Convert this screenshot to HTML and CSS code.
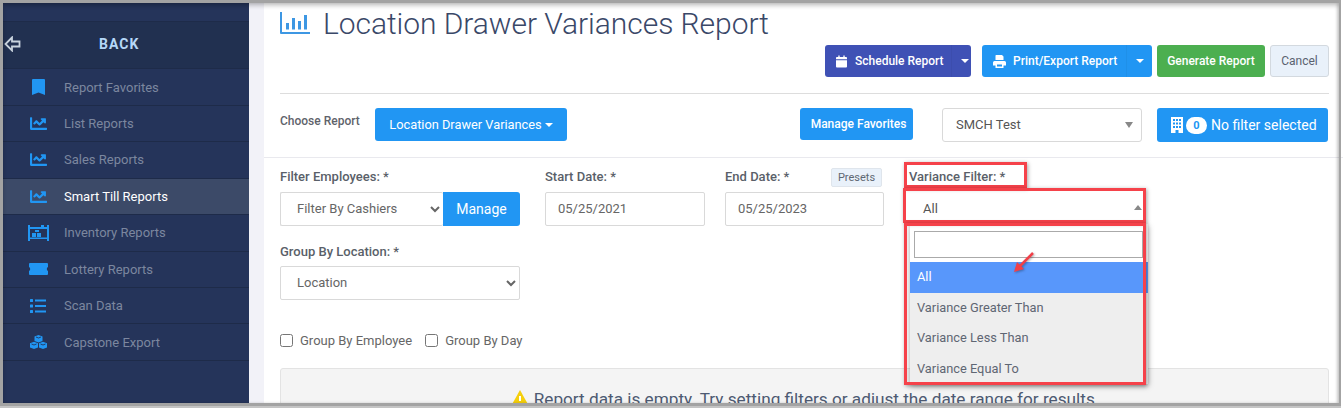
FILE: index.html
```html
<!DOCTYPE html>
<html lang="en">
<head>
    <meta charset="UTF-8">
    <title>Location Drawer Variances Report</title>
    <link rel="stylesheet" href="styles.css">
</head>
<body>
<div class="shot">
    <aside class="sidebar">
        <div class="side-top"></div>
        <div class="side-back">
            <svg class="back-arrow" viewBox="0 0 17 16" width="17" height="16"><path d="M8 1.500 1.500 8 8 14.500V10.500H15.500V5.500H8Z" fill="none" stroke="#c9d3de" stroke-width="1.800"/></svg>
            <span>BACK</span>
        </div>
        <a class="side-item">
            <span class="side-icon"><svg viewBox="0 0 13 16" width="13" height="16"><path d="M0 16V1Q0 0 1 0H12Q13 0 13 1V16L6.500 13.500Z"/></svg></span>Report Favorites
        </a>
        <a class="side-item">
            <span class="side-icon"><svg viewBox="0 0 512 512" width="17" height="17"><path d="M496 384H64V80c0-8.840-7.160-16-16-16H16C7.160 64 0 71.160 0 80v336c0 17.670 14.330 32 32 32h464c8.840 0 16-7.160 16-16v-32c0-8.840-7.160-16-16-16zM464 96H345.940c-21.380 0-32.090 25.850-16.970 40.970l32.400 32.400L288 242.750l-73.370-73.370c-12.500-12.500-32.760-12.500-45.250 0l-68.690 68.690c-6.250 6.250-6.250 16.380 0 22.630l22.620 22.620c6.250 6.250 16.380 6.250 22.630 0L192 237.250l73.370 73.370c12.500 12.500 32.760 12.500 45.250 0l96-96 32.400 32.400c15.120 15.120 40.970 4.410 40.970-16.970V112c0-8.840-7.160-16-16-16z"/></svg></span>List Reports
        </a>
        <a class="side-item">
            <span class="side-icon"><svg viewBox="0 0 512 512" width="17" height="17"><path d="M496 384H64V80c0-8.840-7.160-16-16-16H16C7.160 64 0 71.160 0 80v336c0 17.670 14.330 32 32 32h464c8.840 0 16-7.160 16-16v-32c0-8.840-7.160-16-16-16zM464 96H345.940c-21.380 0-32.090 25.850-16.970 40.970l32.400 32.400L288 242.750l-73.370-73.370c-12.500-12.500-32.760-12.500-45.250 0l-68.690 68.690c-6.250 6.250-6.250 16.380 0 22.630l22.620 22.620c6.250 6.250 16.380 6.250 22.630 0L192 237.250l73.370 73.370c12.500 12.500 32.760 12.500 45.250 0l96-96 32.400 32.400c15.120 15.120 40.970 4.410 40.970-16.970V112c0-8.840-7.160-16-16-16z"/></svg></span>Sales Reports
        </a>
        <a class="side-item active">
            <span class="side-icon"><svg viewBox="0 0 512 512" width="17" height="17"><path d="M496 384H64V80c0-8.840-7.160-16-16-16H16C7.160 64 0 71.160 0 80v336c0 17.670 14.330 32 32 32h464c8.840 0 16-7.160 16-16v-32c0-8.840-7.160-16-16-16zM464 96H345.940c-21.380 0-32.090 25.850-16.970 40.970l32.400 32.400L288 242.750l-73.370-73.370c-12.500-12.500-32.760-12.500-45.250 0l-68.690 68.690c-6.250 6.250-6.250 16.380 0 22.630l22.620 22.620c6.250 6.250 16.380 6.250 22.630 0L192 237.250l73.370 73.370c12.500 12.500 32.760 12.500 45.250 0l96-96 32.400 32.400c15.120 15.120 40.970 4.410 40.970-16.970V112c0-8.840-7.160-16-16-16z"/></svg></span>Smart Till Reports
        </a>
        <a class="side-item">
            <span class="side-icon"><svg viewBox="0 0 21 16" width="21" height="16"><path d="M0 0H2V2H13V0H16V2H19V0H21V16H19V14H2V16H0ZM2 4V12.500H19V4Z" fill-rule="evenodd"/><path d="M4 8H8V12H4ZM9 8H13V12H9ZM7 5H11V7H7Z"/></svg></span>Inventory Reports
        </a>
        <a class="side-item">
            <span class="side-icon"><svg viewBox="0 0 19 12" width="19" height="12"><path d="M1 0H18Q19 0 19 1V4Q17.800 4.500 17.800 6T19 8V11Q19 12 18 12H1Q0 12 0 11V8Q1.200 7.500 1.200 6T0 4V1Q0 0 1 0Z"/></svg></span>Lottery Reports
        </a>
        <a class="side-item">
            <span class="side-icon"><svg viewBox="0 0 16 14" width="16" height="14"><rect width="3" height="3" rx=".5"/><rect y="5.500" width="3" height="3" rx=".5"/><rect y="11" width="3" height="3" rx=".5"/><rect x="5" y=".5" width="11" height="2"/><rect x="5" y="6" width="11" height="2"/><rect x="5" y="11.500" width="11" height="2"/></svg></span>Scan Data
        </a>
        <a class="side-item">
            <span class="side-icon"><svg viewBox="0 0 17 14" width="17" height="14"><path d="M8.500 0 12.500 1.500V6L8.500 7.500 4.500 6V1.500Z"/><path d="M4 6.800 8 8.300V12.500L4 14 0 12.500V8.300Z"/><path d="M13 6.800 17 8.300V12.500L13 14 9 12.500V8.300Z"/><path d="M6 2 8.500 3 11 2M1.500 9 4 10 6.500 9M10.500 9 13 10 15.500 9" fill="none" stroke="#25345a" stroke-width=".9"/></svg></span>Capstone Export
        </a>
    </aside>

    <main class="main">
        <header class="report-head">
            <div class="title-row">
                <svg class="title-icon" viewBox="0 0 30 22" width="30" height="22"><path d="M0 0H2V20H30V22H1Q0 22 0 21Z"/><rect x="6" y="11" width="3" height="6.500"/><rect x="12" y="6" width="3" height="11.500"/><rect x="18" y="9" width="3" height="8.500"/><rect x="24" y="3" width="3" height="14.500"/></svg>
                <h1 class="page-title">Location Drawer Variances Report</h1>
            </div>
            <div class="action-row">
                <div class="btn-split btn-indigo">
                    <span class="btn-main schedule-main">
                        <svg viewBox="0 0 12 13" width="11" height="13" fill="#fff"><path d="M0 5H12V12Q12 13 11 13H1Q0 13 0 12ZM1 1.500H2.500V0H4V1.500H8V0H9.500V1.500H11Q12 1.500 12 2.500V4H0V2.500Q0 1.500 1 1.500Z"/></svg>
                        Schedule Report
                    </span>
                    <span class="btn-caret schedule-caret"><i class="caret"></i></span>
                </div>
                <div class="btn-split btn-blue">
                    <span class="btn-main print-main">
                        <svg viewBox="0 0 13 13" width="13" height="13" fill="#fff"><path d="M3 0H9L10.500 1.500V5H2.500V.5ZM1.500 6H11.500Q13 6 13 7.500V10.500H10.500V13H2.500V10.500H0V7.500Q0 6 1.500 6ZM4 9.500V11.500H9V9.500Z" fill-rule="evenodd"/></svg>
                        Print/Export Report
                    </span>
                    <span class="btn-caret print-caret"><i class="caret"></i></span>
                </div>
                <button class="btn btn-green generate-btn">Generate Report</button>
                <button class="btn btn-light cancel-btn">Cancel</button>
            </div>
            <hr class="head-rule">
            <div class="choose-row">
                <span class="choose-label">Choose Report</span>
                <button class="btn btn-blue report-btn">Location Drawer Variances<i class="caret"></i></button>
                <button class="btn btn-blue favorites-btn">Manage Favorites</button>
                <div class="store-select">SMCH Test<i class="caret caret-grey"></i></div>
                <button class="btn btn-blue filter-btn">
                    <svg viewBox="0 0 12 16" width="12" height="16" fill="#fff"><path d="M0 0H12V16H7.500V13H4.500V16H0ZM2 2V4H4V2ZM5 2V4H7V2ZM8 2V4H10V2ZM2 5.500V7.500H4V5.500ZM5 5.500V7.500H7V5.500ZM8 5.500V7.500H10V5.500ZM2 9V11H4V9ZM5 9V11H7V9ZM8 9V11H10V9Z" fill-rule="evenodd"/></svg>
                    <span class="count-badge">0</span>No filter selected
                </button>
            </div>
        </header>

        <section class="filters">
            <div class="filter-row">
                <div class="field field-employees">
                    <label class="field-label">Filter Employees: *</label>
                    <div class="input-group">
                        <select class="control"><option>Filter By Cashiers</option></select>
                        <button class="btn btn-blue manage-btn">Manage</button>
                    </div>
                </div>
                <div class="field field-start">
                    <label class="field-label">Start Date: *</label>
                    <input class="control" value="05/25/2021">
                </div>
                <div class="field field-end">
                    <div class="label-row">
                        <label class="field-label">End Date: *</label>
                        <button class="presets-btn">Presets</button>
                    </div>
                    <input class="control" value="05/25/2023">
                </div>
                <div class="field field-variance">
                    <label class="field-label">Variance Filter: *</label>
                    <div class="variance-select">All<i class="caret caret-grey caret-up"></i></div>
                    <div class="variance-menu">
                        <div class="menu-search"><input class="menu-input"></div>
                        <div class="menu-option selected">All</div>
                        <div class="menu-option">Variance Greater Than</div>
                        <div class="menu-option">Variance Less Than</div>
                        <div class="menu-option">Variance Equal To</div>
                    </div>
                </div>
            </div>
            <div class="field field-group">
                <label class="field-label">Group By Location: *</label>
                <select class="control"><option>Location</option></select>
            </div>
            <div class="check-row">
                <label class="check"><input type="checkbox">Group By Employee</label>
                <label class="check"><input type="checkbox">Group By Day</label>
            </div>
            <div class="empty-panel">
                <svg viewBox="0 0 20 18" width="20" height="18"><path d="M10 0 20 18H0Z" fill="#f5cf0c"/><rect x="9" y="6" width="2" height="5" fill="#fff"/></svg>
                <span>Report data is empty. Try setting filters or adjust the date range for results.</span>
            </div>
        </section>
    </main>

    <!-- annotations drawn on top of the screenshot -->
    <div class="mark mark-label"></div>
    <div class="mark mark-select"></div>
    <div class="mark mark-menu"></div>
    <svg class="mark-arrow" viewBox="0 0 22 22" width="22" height="22"><path d="M20 2 6 16" stroke="#f04048" stroke-width="2.500" fill="none"/><path d="M1 21 11 18 4 11Z" fill="#f04048"/></svg>
    <div class="frame"></div>
</div>
</body>
</html>
```

FILE: styles.css
```css
html,body{
    margin:0;
    padding:0;
    background:#fff;
}
.shot{
    width:1343px;
    height:408px;
    position:relative;
    overflow:hidden;
    display:flex;
    font-family:Roboto,"Liberation Sans",sans-serif;
    background:#f2f2f8;
}

/* sidebar */
.sidebar{
    width:249px;
    flex:none;
    background:#25345a;
    margin-right:15px;
}
.side-top{
    height:21px;
}
.side-back{
    height:48.400px;
    background:#213050;
    border-top:1px solid #1e2b49;
    border-bottom:1px solid #1e2b49;
    box-sizing:border-box;
    display:flex;
    align-items:center;
    padding:0 0 2px 4px;
    font-size:14px;
    font-weight:700;
    letter-spacing:1px;
    color:#b5d7f8;
}
.back-arrow{
    margin-right:78px;
}
.side-item{
    height:36.450px;
    box-sizing:border-box;
    border-bottom:1px solid #1e2b49;
    display:flex;
    align-items:center;
    font-size:13px;
    color:#7c879f;
}
.side-item.active{
    background:#3c4a68;
    color:#fff;
}
.side-icon{
    width:64px;
    padding:0 1px 0 13px;
    box-sizing:border-box;
    display:flex;
    justify-content:center;
    fill:#2196f3;
}

/* report header */
.main{
    flex:1;
    background:#fff;
}
.report-head{
    height:158px;
    box-sizing:border-box;
    border-bottom:1px solid #e9e9ee;
    padding:2px 14px 0 16px;
}
.title-row{
    height:43px;
    display:flex;
    align-items:center;
    gap:13px;
}
.title-icon{
    fill:#3d97e3;
    margin-top:-2px;
}
.page-title{
    margin:0;
    font-size:30px;
    font-weight:300;
    letter-spacing:-.05px;
    color:#3a4868;
}
.action-row{
    height:32px;
    display:flex;
    justify-content:flex-end;
}
.btn{
    border:0;
    border-radius:3px;
    font-family:inherit;
    font-size:12px;
    font-weight:500;
    color:#fff;
    padding:0;
}
.btn-blue{
    background:#2196f3;
}
.btn-green{
    background:#4caf50;
}
.btn-indigo{
    background:#3f51b5;
}
.btn-light{
    background:#e9f1fa;
    border:1px solid #d3d9df;
    color:#5a6270;
    font-weight:400;
}
.btn-split{
    display:flex;
    border-radius:3px;
    color:#fff;
    font-size:12px;
    font-weight:500;
}
.btn-split + .btn-split{
    margin-left:11px;
}
.btn-main{
    display:flex;
    align-items:center;
    box-sizing:border-box;
    border-right:1px solid rgba(0,0,0,.04);
}
.schedule-main{
    width:127px;
    gap:8px;
    padding-left:11px;
}
.print-main{
    width:145px;
    gap:7px;
    padding-left:11px;
}
.btn-caret{
    display:flex;
    align-items:center;
    justify-content:center;
    box-sizing:border-box;
}
.schedule-caret{
    width:19px;
    padding-left:7px;
}
.print-caret{
    width:25px;
}
.generate-btn{
    width:108px;
    margin-left:5px;
}
.cancel-btn{
    width:59px;
    margin-left:5px;
}
.caret{
    display:inline-block;
    width:0;
    height:0;
    border-left:4px solid transparent;
    border-right:4px solid transparent;
    border-top:4px solid #fff;
}
.caret-grey{
    border-top-color:#888;
    position:absolute;
    right:8px;
    top:13px;
    border-left-width:4.500px;
    border-right-width:4.500px;
    border-top-width:6px;
}
.caret-up{
    border-top:0;
    border-bottom:5px solid #888;
}
.head-rule{
    margin:16px 0 14px;
    border:0;
    border-top:1px solid #ddd;
}
.choose-row{
    display:flex;
    align-items:flex-start;
}
.choose-label{
    width:95px;
    margin-top:6px;
    font-size:12px;
    font-weight:500;
    color:#5f636b;
}
.report-btn{
    width:192px;
    height:33px;
    font-size:12.800px;
    font-weight:400;
}
.report-btn .caret{
    margin-left:3px;
    vertical-align:2px;
}
.favorites-btn{
    width:113px;
    height:32px;
    margin-left:233px;
    padding-left:4px;
}
.store-select{
    width:200px;
    height:34px;
    margin-left:29px;
    box-sizing:border-box;
    border:1px solid #d9d9d9;
    border-radius:3px;
    padding-left:13px;
    line-height:32px;
    font-size:13px;
    color:#555;
    position:relative;
}
.filter-btn{
    width:171px;
    height:34px;
    margin-left:15px;
    font-size:14px;
    font-weight:400;
    display:flex;
    align-items:center;
    padding-left:14px;
}
.count-badge{
    width:21px;
    height:17px;
    margin:0 4px 0 3px;
    border-radius:9px;
    background:#fff;
    color:#2196f3;
    font-size:11px;
    font-weight:700;
    line-height:17px;
    text-align:center;
}

/* filters */
.filters{
    padding:11px 14px 0 16px;
}
.filter-row{
    display:flex;
}
.field{
    display:flex;
    flex-direction:column;
}
.field-label{
    height:16px;
    line-height:16px;
    margin-bottom:7px;
    font-size:13px;
    font-weight:500;
    color:#5a5f69;
}
.field-employees{
    width:240px;
    margin-right:25px;
}
.field-start{
    width:160px;
    margin-right:20px;
}
.field-end{
    width:159px;
    margin-right:25px;
}
.field-variance{
    width:236px;
    position:relative;
}
.label-row{
    display:flex;
    justify-content:space-between;
    margin-top:-1px;
}
.label-row .field-label{
    margin-top:1px;
}
.control{
    width:100%;
    height:34px;
    box-sizing:border-box;
    border:1px solid #d9d9d9;
    border-radius:2px;
    background:#fff;
    font-family:inherit;
    font-size:13px;
    color:#666;
    padding:0 12px 2px;
    margin:0;
}
.input-group{
    display:flex;
}
.input-group .control{
    flex:1;
    width:163px;
    border-right:0;
}
.manage-btn{
    width:77px;
    height:34px;
    font-size:14px;
    font-weight:400;
    border-radius:0 3px 3px 0;
}
.presets-btn{
    width:51px;
    height:19px;
    margin:0 2px 0 0;
    border:1px solid #dfe5ec;
    border-radius:2px;
    background:#e9f1fa;
    font-family:inherit;
    font-size:11px;
    color:#5f6873;
    padding:0;
}
.variance-select{
    height:30px;
    box-sizing:border-box;
    line-height:34px;
    padding-left:14px;
    font-size:13px;
    color:#555;
    position:relative;
    width:232px;
}
.variance-select .caret-grey{
    top:13px;
    right:-1px;
}
.variance-menu{
    position:absolute;
    left:1px;
    top:55px;
    width:238px;
    box-shadow:0 2px 6px rgba(0,0,0,.35);
    background:#eee;
}
.menu-search{
    height:38px;
    box-sizing:border-box;
    padding:7px 0 0 4px;
    background:#fff;
}
.menu-input{
    width:229px;
    height:27px;
    box-sizing:border-box;
    border:1px solid #aaa;
    display:block;
    padding:0;
}
.menu-option{
    height:30.500px;
    line-height:30px;
    padding-left:7px;
    font-size:12.800px;
    color:#5f6673;
}
.menu-option.selected{
    background:#5897fb;
    color:#fff;
}
.field-group{
    width:240px;
    margin-top:18px;
}
.field-group .field-label{
    margin-bottom:6px;
}
.check-row{
    display:flex;
    gap:13px;
    margin-top:31px;
    height:18px;
}
.check{
    display:flex;
    align-items:center;
    font-size:13px;
    color:#666;
}
.check input{
    width:13px;
    height:13px;
    margin:1px 7px 0 0;
}
.empty-panel{
    height:60px;
    margin-top:19px;
    box-sizing:border-box;
    border:1px solid #e3e3e3;
    border-radius:3px;
    background:#f4f4f4;
    display:flex;
    justify-content:center;
    align-items:flex-start;
    gap:4px;
    padding:20px 0 0 0;
    font-size:17.200px;
    color:#4d5a72;
}
.empty-panel svg{
    margin-top:1px;
}

/* red annotation boxes */
.mark{
    position:absolute;
    box-sizing:border-box;
    border:3px solid #f5424a;
    box-shadow:1px 1px 4px rgba(0,0,0,.35);
}
.mark-label{
    left:904px;
    top:162px;
    width:123px;
    height:26px;
}
.mark-select{
    left:903px;
    top:188px;
    width:243px;
    height:35px;
}
.mark-menu{
    left:904px;
    top:223px;
    width:242px;
    height:162px;
}
.mark-arrow{
    position:absolute;
    left:1013px;
    top:251px;
    filter:drop-shadow(1px 1px 1px rgba(0,0,0,.3));
}
.frame{
    position:absolute;
    left:0;
    top:0;
    width:1341px;
    height:406px;
    box-sizing:border-box;
    border:solid #a3a3a3;
    border-width:3px 2px 3px 3px;
    box-shadow:inset 0 3px 4px rgba(0,0,0,.2),inset -2px 0 3px rgba(0,0,0,.15),0 2px 0 #c4c4c4;
}
```
